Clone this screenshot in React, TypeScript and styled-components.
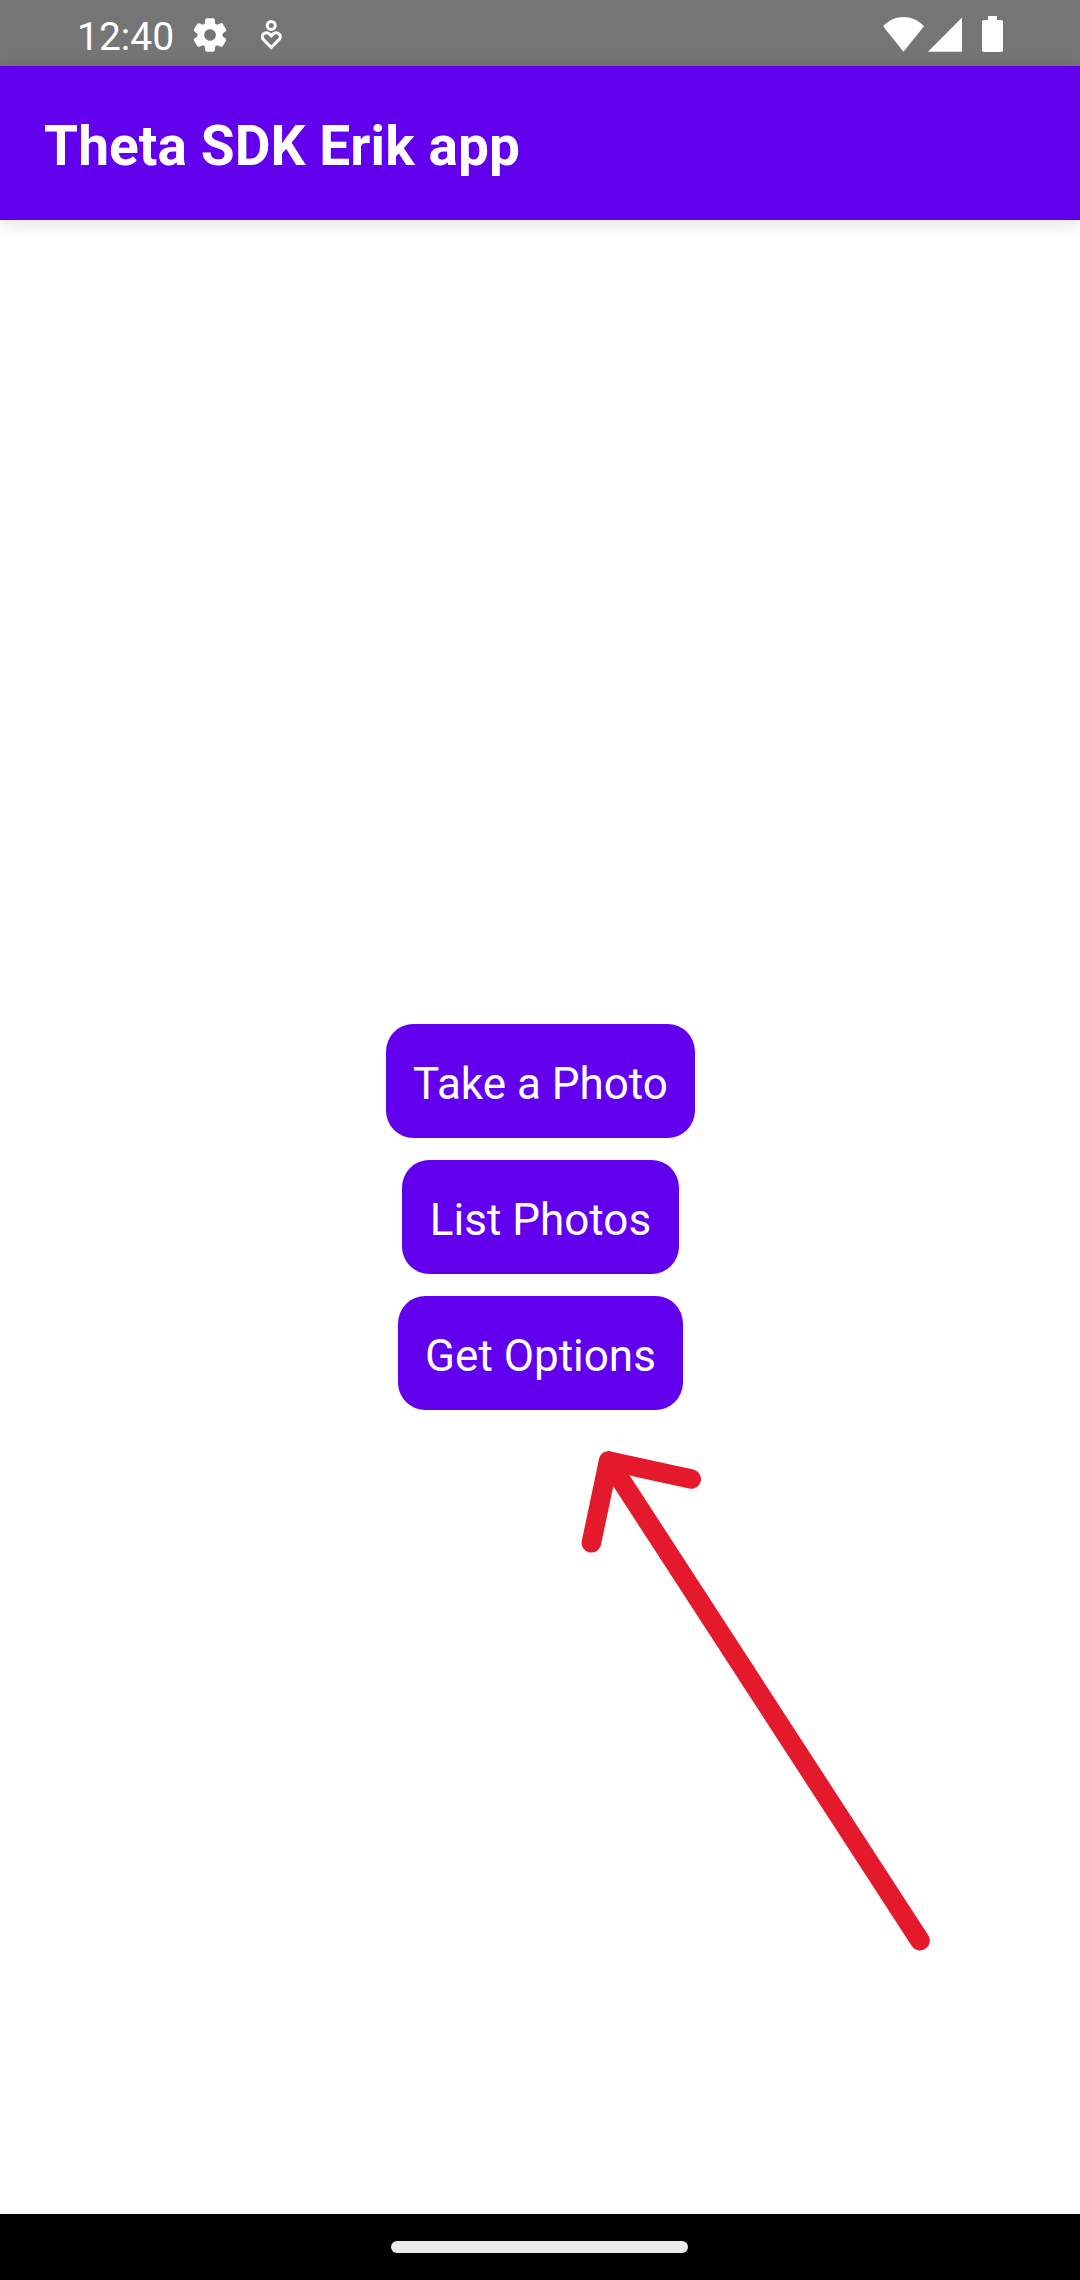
import React from "react";
import styled, { createGlobalStyle } from "styled-components";

const PURPLE = "#6200ee";

const GlobalStyle = createGlobalStyle`
  *, *::before, *::after { box-sizing: border-box; }
  html, body { margin: 0; padding: 0; background: #fff; }
  body { font-family: Roboto, "Noto Sans", sans-serif; color: #fff; }
`;

const Screen = styled.div`
  width: 1080px;
  height: 2280px;
  display: flex;
  flex-direction: column;
  overflow: hidden;
  background: #fff;
`;

const StatusBar = styled.div`
  flex: none;
  height: 66px;
  display: flex;
  align-items: flex-start;
  justify-content: space-between;
  padding: 0 77px;
  background: #757575;
`;

const StatusGroup = styled.div`
  display: flex;
  align-items: flex-start;
`;

const Clock = styled.span`
  width: 97px;
  padding-top: 14px;
  font-size: 39px;
  line-height: 46px;
  white-space: nowrap;
`;

const Glyph = styled.svg<{ $left?: number; $top: number }>`
  display: block;
  flex: none;
  margin-left: ${(p) => p.$left ?? 0}px;
  margin-top: ${(p) => p.$top}px;
`;

const AppBar = styled.header`
  flex: none;
  position: relative;
  height: 154px;
  display: flex;
  align-items: center;
  padding: 6px 44px 0;
  background: ${PURPLE};
  box-shadow: 0 4px 18px rgba(0, 0, 0, 0.12);
`;

const Title = styled.h1`
  margin: 0;
  font-size: 55px;
  font-weight: 700;
  line-height: 64px;
  letter-spacing: 0.08px;
  white-space: nowrap;
`;

const Content = styled.main`
  flex: 1;
  position: relative;
  display: flex;
  flex-direction: column;
  align-items: center;
  justify-content: center;
  gap: 22px;
  padding-left: 1px;
`;

const ActionButton = styled.button`
  height: 114px;
  padding: 6px 27.5px 0;
  border: 0;
  border-radius: 27.5px;
  background: ${PURPLE};
  color: #fff;
  font: 400 44px/52px Roboto, "Noto Sans", sans-serif;
  white-space: nowrap;
`;

const Arrow = styled.svg`
  position: absolute;
  left: 570px;
  top: 1220px;
  pointer-events: none;
`;

const NavBar = styled.div`
  flex: none;
  height: 66px;
  display: flex;
  justify-content: center;
  padding: 27px 1px 0 0;
  background: #000;
`;

const HomeHandle = styled.div`
  width: 297px;
  height: 12px;
  border-radius: 6px;
  background: #ebebeb;
`;

const actions = ["Take a Photo", "List Photos", "Get Options"];

const SettingsIcon = () => (
  <Glyph $left={16} $top={15} width="40" height="40" viewBox="0 0 24 24" fill="#fff">
    <path d="M19.5 12c0-.23-.01-.45-.03-.68l1.86-1.41c.4-.3.51-.86.26-1.3l-1.87-3.23a.987.987 0 0 0-1.25-.42l-2.15.91c-.37-.26-.76-.49-1.17-.68l-.29-2.31c-.06-.5-.49-.88-.99-.88h-3.73c-.51 0-.94.38-1 .88l-.29 2.31c-.41.19-.8.42-1.17.68l-2.15-.91c-.46-.2-1-.02-1.25.42L2.41 8.62c-.25.44-.14.99.26 1.3l1.86 1.41a7.343 7.343 0 0 0 0 1.35l-1.86 1.41c-.4.3-.51.86-.26 1.3l1.87 3.23c.25.44.79.62 1.25.42l2.15-.91c.37.26.76.49 1.17.68l.29 2.31c.06.5.49.88.99.88h3.73c.5 0 .93-.38.99-.88l.29-2.31c.41-.19.8-.42 1.17-.68l2.15.91c.46.2 1 .02 1.25-.42l1.87-3.23c.25-.44.14-.99-.26-1.3l-1.86-1.41c.03-.23.04-.45.04-.68zm-7.46 3.5c-1.93 0-3.5-1.57-3.5-3.5s1.57-3.5 3.5-3.5 3.5 1.57 3.5 3.5-1.57 3.5-3.5 3.5z" />
  </Glyph>
);

const WellbeingIcon = () => (
  <Glyph $left={28} $top={18} width="26" height="34" viewBox="0 0 26 34" fill="none" stroke="#fff" strokeWidth="3">
    <circle cx="13.2" cy="7.4" r="4" />
    <path d="M13.3 29.5L5.7 21.9C1.4 17.6 7.6 12.2 11.6 16.1L13.3 17.9L15 16.1C19 12.2 25.2 17.6 20.9 21.9Z" />
  </Glyph>
);

export default function App() {
  return (
    <>
      <GlobalStyle />
      <Screen>
        <StatusBar>
          <StatusGroup>
            <Clock>12:40</Clock>
            <SettingsIcon />
            <WellbeingIcon />
          </StatusGroup>
          <StatusGroup>
            <Glyph $top={17} width="41" height="35" viewBox="0 0 41 35" fill="#fff">
              <path d="M0 9.3C12 -3 29 -3 41 9.3L20.5 34.7Z" />
            </Glyph>
            <Glyph $left={4} $top={17} width="34" height="35" viewBox="0 0 34 35" fill="#fff">
              <path d="M34 .5V34.8H0Z" />
            </Glyph>
            <Glyph $left={20} $top={16} width="21" height="36" viewBox="0 0 21 36" fill="#fff">
              <path d="M6 0H15V4H19Q21 4 21 6V34Q21 36 19 36H2Q0 36 0 34V6Q0 4 2 4H6Z" />
            </Glyph>
          </StatusGroup>
        </StatusBar>
        <AppBar>
          <Title>Theta SDK Erik app</Title>
        </AppBar>
        <Content>
          {actions.map((label) => (
            <ActionButton key={label} type="button">
              {label}
            </ActionButton>
          ))}
          <Arrow width="380" height="520" viewBox="570 1440 380 520" fill="none" stroke="#e4192c" strokeWidth="19.6" strokeLinecap="round" strokeLinejoin="round">
            <path d="M591.4 1542.8L608.6 1461L691.2 1479" />
            <path d="M608.6 1461L920 1940.6" />
          </Arrow>
        </Content>
        <NavBar>
          <HomeHandle />
        </NavBar>
      </Screen>
    </>
  );
}
